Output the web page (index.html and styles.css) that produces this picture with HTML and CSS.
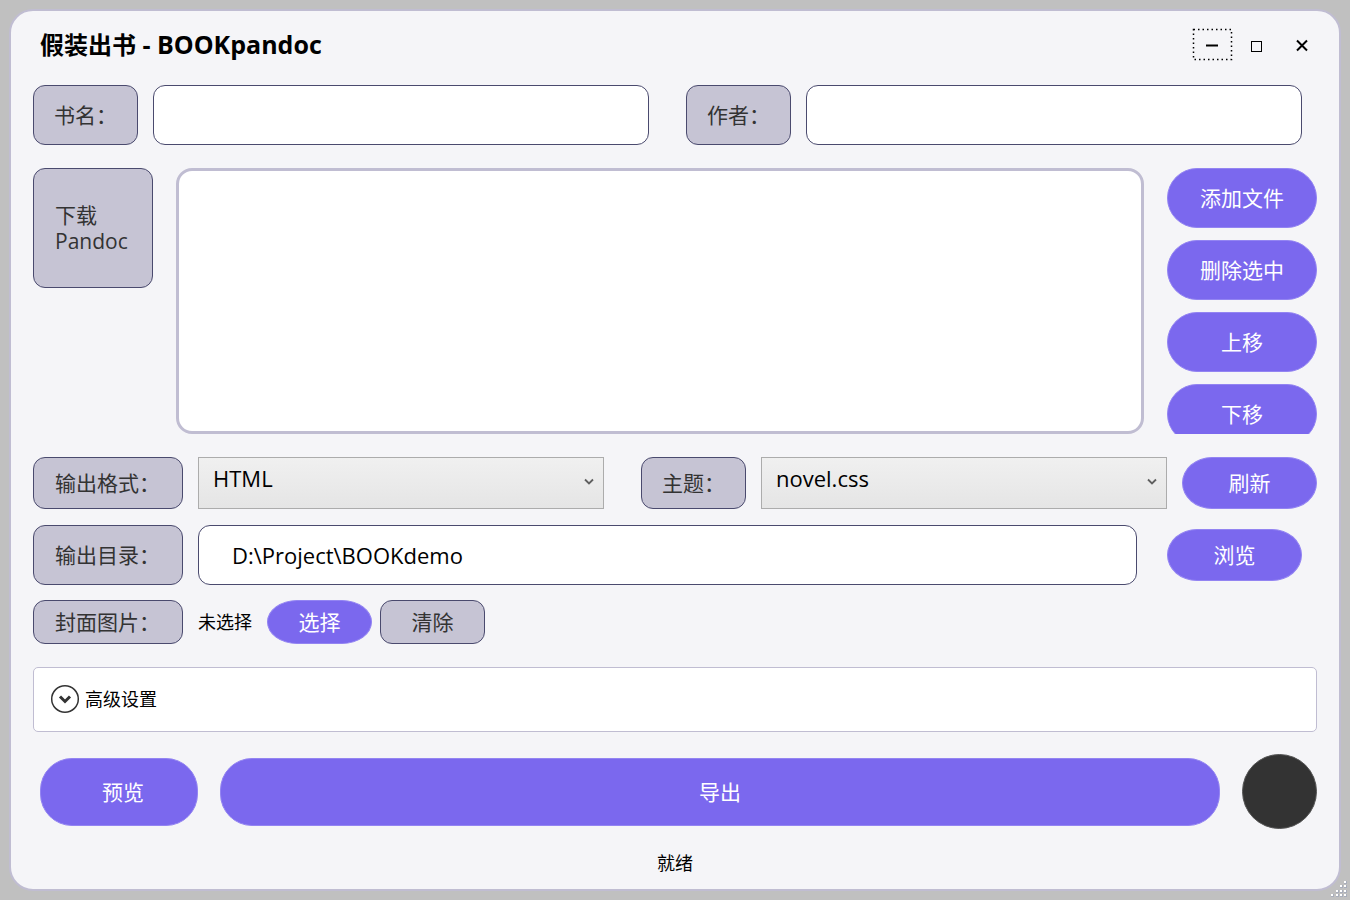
FILE: index.html
```
<!doctype html>
<html lang="zh-CN">
<head>
    <meta charset="UTF-8">
    <meta name="viewport" content="width=device-width, initial-scale=1.0">
    <title>假装出书 - BOOKpandoc</title>
    <link rel="stylesheet" href="styles.css">
</head>
<body>
    <main class="window">
        <header class="title-bar">
            <h1>假装出书<span class="brand"> - BOOKpandoc</span></h1>
            <div class="window-buttons">
                <button type="button" aria-label="最小化">
                    <svg width="41" height="33" viewBox="0 0 41 33">
                        <rect x="1.5" y="1.5" width="38" height="30" fill="none" stroke="#000" stroke-width="1.5" stroke-dasharray="1.5 3"/>
                        <path d="M14 17.5h12" stroke="#000" stroke-width="2"/>
                    </svg>
                </button>
                <button type="button" aria-label="最大化">
                    <svg width="41" height="33" viewBox="0 0 41 33">
                        <rect x="14.5" y="13.5" width="10" height="10" fill="none" stroke="#000"/>
                    </svg>
                </button>
                <button type="button" aria-label="关闭">
                    <svg width="41" height="33" viewBox="0 0 41 33">
                        <path d="M15 12.5l10 10M25 12.5l-10 10" stroke="#000" stroke-width="2"/>
                    </svg>
                </button>
            </div>
        </header>

        <form class="content">
            <div class="row book-row">
                <label class="tag tag-small" for="book-title">书名：</label>
                <input class="text-box" type="text" id="book-title">
                <label class="tag tag-small second" for="author">作者：</label>
                <input class="text-box" type="text" id="author">
            </div>

            <div class="row file-row">
                <button type="button" class="tag download">下载<br>Pandoc</button>
                <select class="file-list" multiple size="8" aria-label="文件"></select>
                <div class="file-actions">
                    <button type="button" class="primary">添加文件</button>
                    <button type="button" class="primary">删除选中</button>
                    <button type="button" class="primary">上移</button>
                    <button type="button" class="primary">下移</button>
                </div>
            </div>

            <div class="row format-row">
                <label class="tag" for="format">输出格式：</label>
                <div class="combo">
                    <select id="format">
                        <option>HTML</option>
                    </select>
                    <svg class="arrow" width="10" height="8" viewBox="0 0 10 8"><path d="M1 1.5l4 4 4-4" fill="none" stroke="#606060" stroke-width="1.8"/></svg>
                </div>
                <label class="tag tag-small second" for="theme">主题：</label>
                <div class="combo">
                    <select id="theme">
                        <option>novel.css</option>
                    </select>
                    <svg class="arrow" width="10" height="8" viewBox="0 0 10 8"><path d="M1 1.5l4 4 4-4" fill="none" stroke="#606060" stroke-width="1.8"/></svg>
                </div>
                <button type="button" class="primary medium">刷新</button>
            </div>

            <div class="row output-row">
                <label class="tag" for="output">输出目录：</label>
                <input class="text-box" type="text" id="output" value="D:\Project\BOOKdemo">
                <button type="button" class="primary medium">浏览</button>
            </div>

            <div class="row cover-row">
                <span class="tag">封面图片：</span>
                <span class="cover-name">未选择</span>
                <button type="button" class="primary small">选择</button>
                <button type="button" class="tag tag-small clear">清除</button>
            </div>

            <details class="advanced">
                <summary>
                    <svg width="30" height="30" viewBox="0 0 30 30">
                        <circle cx="15" cy="15" r="13.3" fill="#fff" stroke="#333" stroke-width="1.5"/>
                        <path d="M10 12.5l5 5 5-5" fill="none" stroke="#333" stroke-width="3"/>
                    </svg>
                    高级设置
                </summary>
            </details>

            <div class="row action-row">
                <button type="button" class="primary preview">预览</button>
                <button type="button" class="primary export">导出</button>
                <button type="button" class="dark-mode" aria-label="切换主题"></button>
            </div>
        </form>

        <footer class="status">就绪</footer>
    </main>

    <svg class="grip" width="16" height="16" viewBox="0 0 16 16">
        <g fill="#a9aebb">
            <path d="M13 0h3v3h-3zM9 4h3v3H9zM13 4h3v3h-3zM5 9h3v3H5zM9 9h3v3H9zM13 9h3v3h-3zM0 13h3v3H0zM5 13h3v3H5zM9 13h3v3H9zM13 13h3v3h-3z"/>
        </g>
        <g fill="#fff">
            <path d="M13 0h2v2h-2zM9 4h2v2H9zM13 4h2v2h-2zM5 9h2v2H5zM9 9h2v2H9zM13 9h2v2h-2zM0 13h2v2H0zM5 13h2v2H5zM9 13h2v2H9zM13 13h2v2h-2z"/>
        </g>
    </svg>
</body>
</html>
```
FILE: styles.css
```
* {
    box-sizing: border-box;
}
body {
    margin: 0;
    padding: 9px;
    height: 100vh;
    background: #c0c0c0;
    color: #000;
    font-family: "Open Sans", "Noto Sans CJK SC", sans-serif;
    font-size: 21px;
    line-height: 26px;
}
button, input, select {
    font: inherit;
    color: inherit;
    margin: 0;
}
button {
    cursor: pointer;
}
.window {
    display: flex;
    flex-direction: column;
    height: 100%;
    min-height: 720px;
    padding: 15px 22px 14px;
    background: #f5f5f8;
    border: 2px solid #c0bdd2;
    border-radius: 24px;
}
.title-bar {
    display: flex;
    justify-content: space-between;
    align-items: center;
    height: 37px;
    margin: 0 -8px 22px 7px;
}
h1 {
    margin: 0;
    font-size: 24px;
    font-weight: bold;
}
.brand {
    font-size: 25px;
}
.window-buttons {
    display: flex;
}
.window-buttons button {
    display: flex;
    justify-content: center;
    align-items: center;
    width: 45px;
    height: 37px;
    padding: 0;
    border: none;
    background: transparent;
}
.content {
    display: flex;
    flex-direction: column;
    flex: 1;
    min-height: 0;
}
.row {
    display: flex;
    align-items: stretch;
    gap: 15px;
}
.tag {
    display: flex;
    align-items: center;
    flex: none;
    width: 150px;
    padding: 0 21px;
    background: #c6c4d4;
    color: #333;
    border: 1px solid #4a4a6e;
    border-radius: 12px;
    white-space: nowrap;
}
.tag-small {
    width: 105px;
    padding: 0 20px;
}
.second {
    margin-left: 22px;
}
.text-box {
    flex: 1;
    min-width: 0;
    padding: 0 33px;
    background: #fff;
    border: 1px solid #4a4a6e;
    border-radius: 12px;
    font-size: 22px;
}
.primary {
    flex: none;
    padding: 0;
    background: #7b68ee;
    color: #fff;
    border: 1px solid #9384f2;
    border-radius: 30px / 50%;
}
.medium {
    width: 135px;
    height: 52px;
}
.small {
    width: 105px;
}
.book-row {
    height: 60px;
    margin: 0 15px 23px 0;
}
.file-row {
    flex: 1;
    gap: 23px;
    min-height: 0;
    margin-bottom: 23px;
}
.download {
    width: 120px;
    height: 120px;
    text-align: left;
}
.file-list {
    flex: 1;
    min-width: 0;
    padding: 12px;
    background: #fff;
    border: 3px solid #c0bdd2;
    border-radius: 16px;
}
.file-actions {
    display: flex;
    flex-direction: column;
    gap: 12px;
    width: 150px;
    overflow: hidden;
}
.file-actions .primary {
    height: 60px;
}
.format-row {
    height: 52px;
    margin-bottom: 16px;
}
.combo {
    position: relative;
    flex: 1;
    min-width: 0;
}
.combo select {
    appearance: none;
    width: 100%;
    height: 100%;
    padding: 0 30px 10px 14px;
    background: linear-gradient(#f0f0f0, #e5e5e5);
    border: 1px solid #acacac;
    border-radius: 0;
    font-size: 22px;
}
.arrow {
    position: absolute;
    right: 10px;
    top: 21px;
    pointer-events: none;
}
.output-row {
    align-items: center;
    height: 60px;
    margin: 0 15px 15px 0;
}
.output-row .tag, .output-row .text-box {
    height: 100%;
}
.output-row .medium {
    margin-left: 15px;
}
.cover-row {
    height: 44px;
    margin-bottom: 23px;
}
.cover-name {
    align-self: center;
    font-size: 18px;
}
.clear {
    justify-content: center;
    margin-left: -7px;
}
.advanced {
    background: #fff;
    border: 1px solid #c0bdd2;
    border-radius: 5px;
    font-size: 18px;
}
summary {
    display: flex;
    align-items: center;
    gap: 5px;
    height: 63px;
    padding: 0 16px 1px;
    list-style: none;
    cursor: pointer;
}
.action-row {
    align-items: center;
    gap: 22px;
    margin: 22px 0 22px 7px;
}
.action-row .primary {
    height: 68px;
    border-radius: 32px;
}
.action-row .preview {
    width: 158px;
    padding-left: 8px;
}
.action-row .export {
    flex: 1;
}
.dark-mode {
    flex: none;
    width: 75px;
    height: 75px;
    background: #333;
    border: 1px solid #555;
    border-radius: 50%;
}
.status {
    font-size: 18px;
    line-height: 24px;
    text-align: center;
}
.grip {
    position: absolute;
    right: 3px;
    bottom: 3px;
}
```
